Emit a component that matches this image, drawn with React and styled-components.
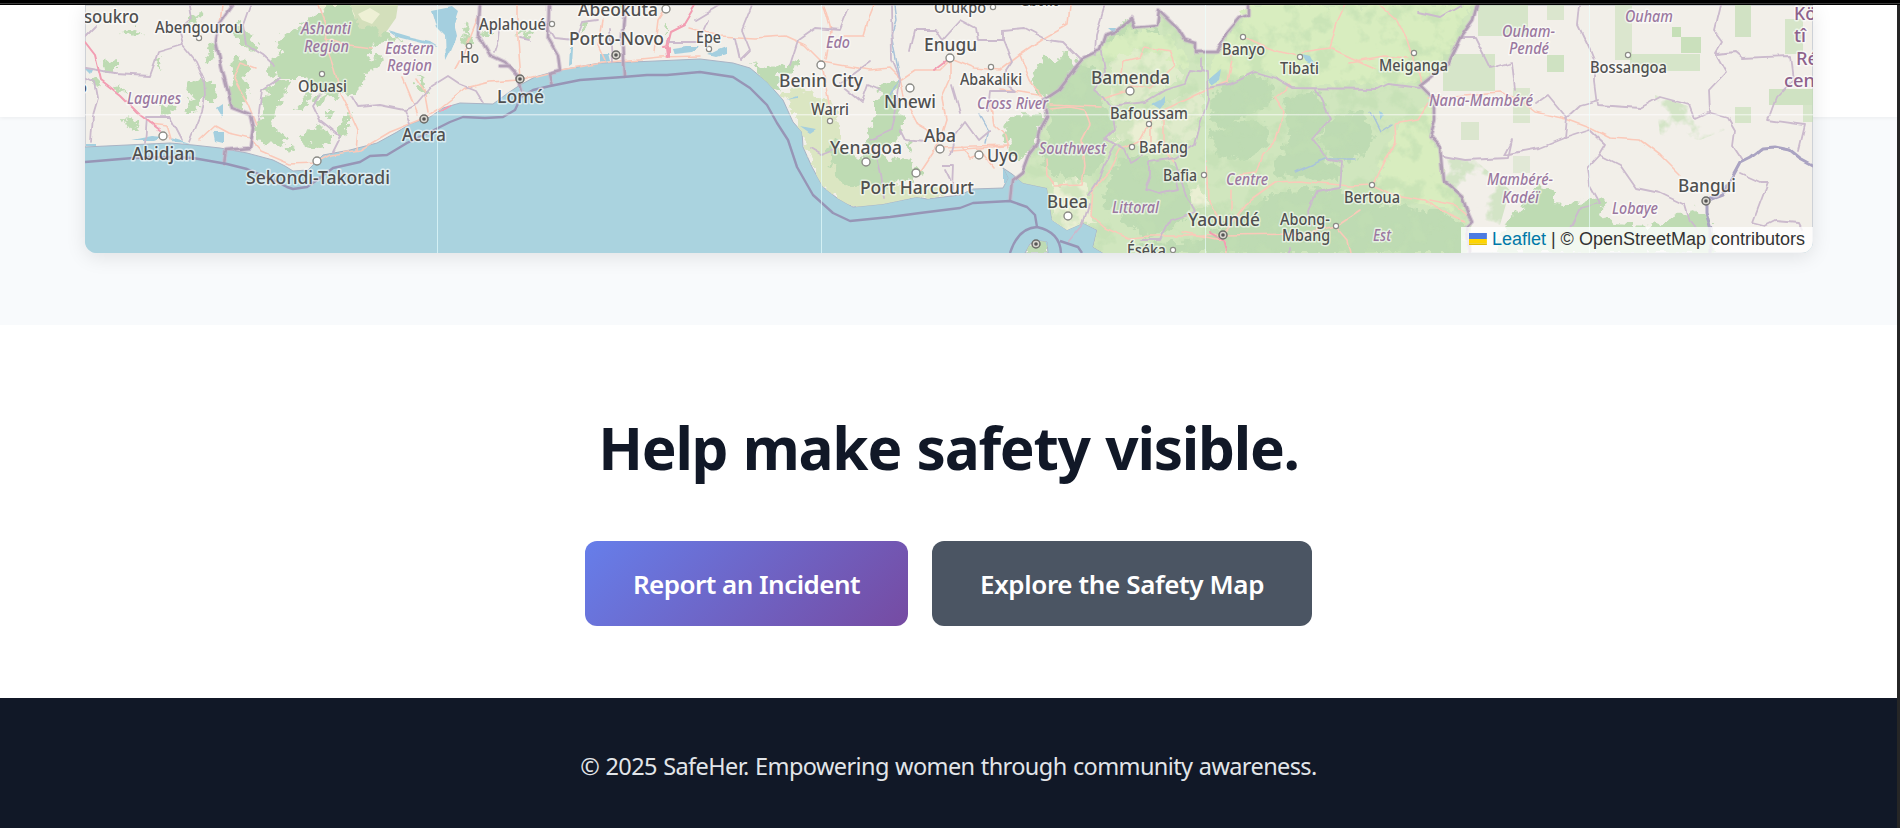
// App.jsx
import React from 'react';
import styled, { createGlobalStyle, css } from 'styled-components';

const GlobalStyle = createGlobalStyle`
  * {
    box-sizing: border-box;
  }

  body {
    margin: 0;
    overflow: hidden;
    background: #ffffff;
    font-family: 'Segoe UI', 'Noto Sans', sans-serif;
  }
`;

const Window = styled.div`
  height: 828px;
  display: flex;
  flex-direction: column;
  background: #262626;
`;

const TopEdge = styled.div`
  flex: none;
  height: 5px;
  background: linear-gradient(#000 3px, #3c3c3c 3px, #3c3c3c 4px, #000 4px);
`;

const Page = styled.main`
  flex: 1;
  margin-right: 3px;
  display: flex;
  flex-direction: column;
  background: #ffffff;
`;

const MapSection = styled.section`
  position: relative;
  height: 320px;
  padding: 0 84px 72px 85px;
  background: #f8fafc;
`;

// Sticky bar that sits behind the map while scrolling
const NavBar = styled.nav`
  position: absolute;
  top: 0;
  left: 0;
  right: 0;
  height: 112px;
  background: #ffffff;
  box-shadow: 0 1px 4px rgba(0, 0, 0, 0.06);
`;

const MapBox = styled.div`
  position: relative;
  height: 248px;
  overflow: hidden;
  border-radius: 0 0 12px 12px;
  background: #aad3df;
`;

const MapShadow = styled.div`
  position: relative;
  border-radius: 0 0 12px 12px;
  box-shadow: 0 4px 20px rgba(0, 0, 0, 0.1);
`;

const MapSvg = styled.svg`
  display: block;
  width: 1728px;
  height: 248px;
  font-family: 'Noto Sans', sans-serif;
`;

const Label = styled.text`
  font-size: ${(p) => p.$size}px;
  font-weight: 500;
  fill: #505050;
  stroke: rgba(255, 255, 255, 0.6);
  stroke-width: 3px;
  stroke-linejoin: round;
  paint-order: stroke;
  ${(p) =>
    p.$kind === 'region' &&
    css`
      fill: #9b78a0;
      font-style: italic;
    `}
  ${(p) =>
    p.$kind === 'country' &&
    css`
      fill: #8d618b;
    `}
`;

const Attribution = styled.div`
  position: absolute;
  right: 0;
  bottom: 0;
  width: 352px;
  height: 26px;
  display: flex;
  align-items: center;
  padding: 0 8px 2px;
  background: rgba(255, 255, 255, 0.8);
  color: #333333;
  font-family: 'Liberation Sans', Arial, sans-serif;
  font-size: 18px;
  line-height: 24px;
  white-space: pre;
`;

const Flag = styled.svg`
  width: 18px;
  height: 12px;
  margin-right: 5px;
`;

const LeafletLink = styled.a`
  color: #0078a8;
  text-decoration: none;
`;

const CallToAction = styled.section`
  height: 373px;
  padding: 72px 0;
  text-align: center;
`;

const Heading = styled.h2`
  margin: 0 0 46px;
  padding-top: 2px;
  color: #111827;
  font-size: 58.5px;
  font-weight: 700;
  line-height: 96px;
  letter-spacing: -1.25px;
  word-spacing: 1.5px;
`;

const ButtonRow = styled.div`
  display: flex;
  justify-content: center;
  gap: 24px;
`;

const Button = styled.button`
  height: 85px;
  padding: 0 48px;
  border: none;
  border-radius: 12px;
  background: ${(p) =>
    p.$primary ? 'linear-gradient(135deg, #667eea 0%, #764ba2 100%)' : '#4b5563'};
  color: #ffffff;
  font-family: inherit;
  font-size: 26px;
  font-weight: 600;
  letter-spacing: ${(p) => (p.$primary ? '-0.53px' : '-0.37px')};
  white-space: nowrap;
  cursor: pointer;
`;

const Footer = styled.footer`
  flex: 1;
  padding-top: 49px;
  background: #111827;
  color: #e2e5e9;
  text-align: center;
`;

const Copyright = styled.p`
  margin: 0;
  font-size: 23.5px;
  line-height: 38px;
  letter-spacing: -0.6px;
  word-spacing: 0.8px;
`;

const COAST =
  'M85 147L127 145 170 143 193 145 220 148 247 153 273 160 285 166 293 171 308 170 323 155 350 150 377 143 397 132 410 124 430 117 443 108 460 103 493 104 508 93 520 85 535 77 560 70 600 63 633 62 700 59 733 63 750 68 767 82 783 100 793 122 802 132 803 147 812 167 823 187 837 198 853 207 883 204 917 197 927 199 960 195 973 189 1003 188 1008 178 1003 168 1012 174 1023 183 1047 188 1052 220 1067 230 1083 223 1097 230 1093 247 1103 253 1813 253 1813 5 85 5Z M1025 253L1030 244 1040 241 1047 242 1048 253Z';

const CAMEROON =
  'M1010 200L1012 180 1022 172 1028 156 1038 143 1041 128 1047 117 1043 100 1058 90 1067 78 1083 58 1100 50 1105 35 1115 32 1132 18 1135 27 1157 25 1159 10 1177 27 1185 40 1195 43 1195 52 1217 52 1228 32 1240 18 1248 15 1248 5 1477 5 1473 20 1460 38 1448 63 1420 85 1435 100 1435 120 1430 137 1440 147 1443 180 1462 197 1468 213 1472 222 1467 253 1103 253 1093 247 1097 230 1083 223 1067 230 1052 220 1047 193Z';

// Dense woodland
const FORESTS = [
  'M275 40L300 25 330 5 352 5 358 24 392 36 402 40 372 45 370 62 362 85 352 95 335 97 318 90 302 78 280 78 268 72 272 60 282 52Z',
  'M252 133L262 115 266 88 278 80 290 82 280 100 272 125 286 137 278 146 262 145Z',
  'M300 136L318 124 328 130 330 145 318 147 303 144Z M342 118l8-4 0 16 -6 5 -8 2z',
  'M186 88L192 80 215 82 214 100 202 100 196 112 186 112 192 98Z',
  'M204 55l8-10 4 10 -5 8z M232 30l8-6 20 22 -8 6 -14-10z M228 60l18-2 4 12 -10 14 -6-10z',
  'M158 60l5-4 -2 14 -5-4z M102 62l14-2 0 12 -12 0z M120 30l14-2 8 6 -12 4z M112 85l8-2 6 8 -10 2z M122 119l12 2 4 8 -10-2z M92 80l5-3 6 8 -8 2z',
  'M228 84l16-6 6 16 -8 18 -14-6z M160 106l18 1 -8 7 -10-2z M188 14l14-2 -4 12 -10-2z',
  'M295 110l18-22 2 4 -14 20z M312 100l14-8 -2 12 -6 4z M285 145l10 0 -4 8z M325 108l10 6 -10 4z',
  'M364 64l12-8 8 2 -10 12 -12 6z M415 74l8 6 4 16 -6-4z M460 40l8-6 6 10 -8 4z M462 26l6-3 2 12 -6-3z M480 33l8-2 6 6 -10 0z',
  'M578 25l12-6 -4 10 -6 2z M515 35l16-6 4 5 -14 2z M618 8l8-2 0 8z M664 25l4 0 0 12z',
  'M750 64L770 69 798 60 796 70 775 76 782 92 766 84Z M785 62l12-4 2 6 -10 4z',
  'M826 146L834 140 845 155 858 160 872 152 884 156 896 162 906 170 900 182 885 190 870 182 858 186 846 186 835 172 830 158Z',
  'M868 134L876 115 876 100 884 84 898 78 893 100 900 108 904 130 898 140 884 150 866 142Z M906 144l8-1 -3 8z M868 164l36-6 20 16 -10 8 -26-6z',
  'M1032 78L1042 60 1060 58 1070 50 1075 62 1072 72 1055 88 1043 98 1034 84Z',
  'M1004 124L1018 114 1046 115 1040 128 1036 142 1022 158 1010 156Z',
  'M1048 90L1072 72 1084 64 1094 66 1095 90 1102 95 1108 110 1112 130 1106 142 1104 160 1090 178 1062 178 1042 165 1044 145 1050 125 1046 104Z',
  'M1112 170L1124 158 1135 154 1152 160 1170 162 1188 182 1194 200 1185 216 1165 232 1140 236 1125 222 1112 206 1104 212 1106 190Z',
  'M1212 95L1230 80 1250 72 1270 82 1274 98 1260 110 1240 118 1225 130 1210 118Z',
  'M1208 132L1250 118 1272 130 1264 150 1245 162 1220 156Z',
  'M1282 100L1315 90 1330 118 1315 140 1326 158 1340 165 1340 180 1300 178 1270 175 1282 150 1290 130Z M1332 118L1360 112 1374 130 1370 150 1352 160 1334 158 1318 142Z',
  'M1200 240L1250 205 1300 188 1340 190 1356 200 1380 206 1410 207 1440 211 1465 226 1467 253 1140 253 1130 245Z',
  'M1494 253L1506 222 1526 206 1540 186 1554 190 1556 203 1575 205 1592 196 1605 200 1600 215 1612 224 1650 226 1668 220 1690 209 1710 216 1714 253Z',
  'M1025 253L1030 244 1040 241 1048 242 1048 253Z M1110 30l22-10 4 12 -20 10 -12 0z M1134 32l24-4 10 16 -14 8z',
];

// Tile-aligned vegetation blocks: x, y, width, height, opacity
const BLOCKS = [
  [1478, 5, 50, 31, 0.6],
  [1547, 5, 17, 15, 0.5],
  [1547, 55, 17, 17, 0.75],
  [1443, 54, 52, 37, 0.6],
  [1513, 88, 17, 35, 0.5],
  [1461, 122, 18, 18, 0.5],
  [1513, 156, 17, 17, 0.35],
  [1615, 5, 17, 55, 0.5],
  [1672, 27, 9, 10, 0.95],
  [1681, 37, 20, 16, 0.85],
  [1630, 54, 70, 17, 0.6],
  [1735, 5, 16, 32, 0.7],
  [1785, 19, 18, 35, 0.6],
  [1769, 89, 44, 16, 0.75],
  [1735, 107, 16, 16, 0.6],
  [1803, 105, 10, 17, 0.6],
];

const BRIGHT =
  'M1250 5L1470 5 1455 40 1444 60 1420 82 1290 86 1265 70 1230 80 1208 88 1212 60 1230 35Z M1384 150L1400 122 1432 102 1434 120 1430 137 1440 147 1443 180 1462 197 1466 212 1440 206 1400 200 1378 184Z M1104 45L1130 30 1170 35 1190 60 1175 78 1150 72 1130 66 1105 60Z';

// Open, lighter land around Bamenda and Bafoussam
const GRASSLAND =
  'M1110 62L1130 50 1165 55 1185 75 1160 90 1145 100 1112 108Z M1114 118L1130 112 1160 104 1190 92 1204 90 1200 120 1192 140 1170 155 1150 150 1125 140 1114 130Z';

const WATER = [
  'M388 30l14 4 10 3 18 4 8 5 -12-2 -12-3 -16-4z M432 10l20-4 6 5 -4 12 3 14 -6 14 -5 10 -1-26 -8-8z',
  'M672 48l14-2 14 0 -8 6 -18 2z M718 50l8-3 0 7 -10 3 -8-2z M600 54l8-1 2 8 -10 2z M570 48l3 0 -1 16 -3 2z',
  'M213 132l10 0 0 12 -8-2z M126 140l26-5 12 1 -10 4z M170 138l20 6 -16-1z M216 108l6-4 0 14z M86 144l10 0 0 2 -10 0z M84 68l8 2 -2 4z',
  'M1208 80l14-12 -2 12 -8 5z M1152 104l8-4 4-4 0 8 -4 5z M1302 54l8 2 4 8 -8-3z M1108 28l8 0 -2 5z',
  'M1378 112l6 3 -4 6z M800 126l16 3 -6 4z M786 100l12-4 0 2z',
  'M1004 170l10 8 12 14 -22 0z M1046 240l4 1 -2 6z',
];

const MOUNT_CLEARINGS =
  'M1054 185l20-8 16 10 -4 20 12 16 -16 0 -14 10 -16-6z M1116 125l24-8 22 2 12 20 -16 12 -22-10 -20 0z M1190 190l10-4 8 20 -14 4z';

// Trunk and primary roads
const ROADS = [
  'M318 5L327 30 326 45 333 65 340 92 350 112 358 130 356 150',
  'M326 38L350 46 372 49',
  'M222 5L220 22 217 38 M256 68L240 62 233 78 248 105 256 125',
  'M200 140L215 126 228 133 250 138 262 152 290 164 315 163 330 155 360 150 390 132 420 120 440 108 465 88 490 82 520 80',
  'M418 115L410 95 403 78 M428 112L424 90 416 78 M150 123l16 2 4 14',
  'M455 68L465 50 480 12 M518 5L518 40 521 78',
  'M520 80L560 70 610 62 660 57 700 56 M605 60L598 45 602 20 M654 52L658 20 668 5',
  'M690 28L720 36 755 38 785 36 805 45 822 62 845 66 870 70 890 68 900 78',
  'M822 65L825 80 830 110 M824 5L831 30 826 60 M864 35L870 15 874 5 M845 36l18 0',
  'M900 78L905 100 918 125 930 132 M900 80L915 70 940 70 950 60',
  'M950 58L950 80 942 98 946 120 938 145 920 172 M950 58L975 68 1000 70 1020 55 1045 38 1068 25 1070 5',
  'M1020 55L1030 80 1042 98 M950 150L1005 146 M980 150l14 18 M1000 90L1020 92 1038 95',
  'M962 146L970 158 982 153 M938 147L1008 145 M990 100L994 125 1005 135 1008 148',
  'M1050 109L1070 107 1085 110 1090 125 1082 140 1085 165 1082 185 1054 186 1047 175 1046 160',
  'M1050 105L1100 107 M1102 99L1125 92 1132 85 1150 88 1165 75 1175 65 1170 52 1145 48 1140 58 1124 62 1122 72',
  'M1148 125L1140 140 1120 150 1110 170 1092 190 1090 215 1105 228 1128 238 1150 236 1186 236 1222 234 M1150 118l0 24 M1164 118l0 32 10 12 M1165 110L1190 98 1207 90 1228 82 1232 60 1228 45',
  'M1243 37L1275 50 1300 57 M1302 52L1330 48 1338 20 1345 5 M1330 48L1352 58 1375 68',
  'M1290 85L1275 98 1284 112 1276 140 1262 155 1256 172 1240 174',
  'M1223 235L1250 200 1275 182 1300 181 1350 186 1372 185 M1206 160L1208 200 1223 226 M1232 190L1232 210',
  'M1223 235L1300 234 1336 226 1360 210 M1223 235L1226 253 M1336 226L1348 240 1351 253 M1182 232L1222 240',
  'M1372 186L1384 160 1396 142 1395 124 1418 120 1428 104 M1380 5L1397 20 1408 42 1412 55 1422 82 M1350 62L1384 56 1408 58',
  'M1428 98L1500 92 1520 100 1535 112 1566 119 1590 128 1610 138 1640 140 1660 155 1680 175',
  'M1372 185L1395 195 1425 200 1450 215 1465 222 M1430 200L1455 205 1466 214',
];

const MOTORWAYS = [
  'M85 42L95 55 101 80 120 95 140 115 160 130',
  'M668 57L667 48 671 32 685 25 697 5 M664 48l5-1 0 10 M950 58l-8 6 -8 6',
  'M1210 232L1223 240 1226 250 M440 111l10-6',
];

// Second-level admin boundaries
const BORDERS = [
  'M85 68L115 73 150 75 158 52 182 45 196 62 204 80 205 95 202 112 190 142 M182 45L178 30 192 18 190 5',
  'M85 77L95 82 98 98 93 115 91 142 M85 38l12-12 M145 143L147 117 170 117 182 140',
  'M250 5L243 25 246 45 262 55 274 66 M352 97L358 107 380 105 405 110 417 104 432 86 448 76 460 84 475 90 483 103',
  'M320 95L313 105 320 120 330 128 340 136 332 152 M405 110l5 14 M258 120L262 90 280 78',
  'M500 20L498 40 494 52 M520 38l10 2 M545 22L555 38 575 40 582 22 598 20 M610 28L612 62',
  'M790 65L798 40 815 28 840 30 848 10 M735 38L740 60 750 50 742 30 752 5 M695 20L720 5 M668 42l30 0 10-22',
  'M810 148L822 155 835 150 M862 102L840 84 870 62 M862 102L868 85 880 90 M900 78L892 60 891 5',
  'M900 80L896 110 892 130 870 140 M900 130L905 140 925 142 M945 170L950 180 M875 150L880 175 884 198',
  'M910 52L915 30 935 30 942 40 960 20 975 28 977 40 1003 40 1003 30 1025 28 1048 40 1062 42 1080 60 M1105 5L1096 35 1095 55',
  'M1003 40L1012 62 1000 80 1015 92 990 92 988 110 M952 85L960 112 M950 155L955 135 965 122 978 140 990 130 M952 190L953 165 942 165',
  'M1102 52L1105 72 1094 90 1102 96 1112 110 1115 130 1105 140 1116 145 1104 165 1098 180 1088 195 M1110 106L1145 102 1165 90 1185 84 1190 70 1207 72 1208 100 1200 125 1195 145 1175 158 1150 162 1150 175 1145 190 1160 194 1178 190 1175 178 M1105 138L1125 150 1130 162 1142 155',
  'M1207 88L1230 84 1255 72 1275 78 1292 88 1378 89 1388 84 1420 88 M1316 90L1330 118 1312 138 1328 160 1342 162 1340 188 1316 192 1308 210 1310 225 M1175 162L1186 195 1195 212 1170 220 1160 240 1140 240',
  'M1068 242l15-18 6-20 M1202 58L1202 70 M1290 247l0 6',
  'M1460 38L1475 38 1490 68 1512 62 1515 90 M1535 104L1548 95 1567 118 1565 138 1540 148 1518 152 1504 155 1512 140 1508 158 1465 160 1443 156',
  'M1580 5L1578 25 1590 50 1594 60 1594 82 1597 105 1640 108 1660 97 1690 105 1695 118 1708 112 1728 118 1735 130 1733 145 1743 160',
  'M1720 5L1714 30 1723 42 1716 54 1726 72 1709 90 1710 112 M1718 54L1735 52 1742 58 1790 56 1793 80 1776 98 1768 120 1804 125 1798 150',
  'M1566 118L1580 105 1598 100 M1565 138L1590 130 1606 145 1600 155 1620 165 1636 188 1660 193 1685 205 1690 222 1700 235',
  'M1600 155L1588 168 1590 185 1600 203 1580 208 1570 228 M1740 173L1760 182 1768 182 1753 222 1765 225 1775 220 1798 222 1802 230 M1418 12L1440 17 1460 5',
];

const NATIONAL = [
  'M232 5L220 22 216 42 222 68 232 108 250 115 253 128 250 148 226 150 224 163',
  'M480 5L478 35 490 55 505 62 518 75 522 90',
  'M549 5L548 38 558 55 560 70 549 73 552 86 M625 5L622 40 624 76 M500 66L510 66 520 78',
  'M1010 200L1012 180 1022 172 1028 156 1038 143 1041 128 1047 117 1043 100 1058 90 1075 68 1083 58 1100 50 1105 35 1115 32 1132 18 1135 27 1157 25 1159 10 1177 27 1185 40 1195 43 1195 52 1217 52 1228 32 1240 18 1248 15 1248 5',
  'M1477 5L1473 20 1460 38 1448 63 1420 85 1435 100 1435 120 1430 137 1440 147 1443 180 1462 197 1468 213 1472 222 1467 227 1469 253',
];

const MARITIME =
  'M85 162L133 158 170 157 193 158 227 164 247 169 273 180 287 187 293 189 307 187 317 180 333 168 360 162 370 156 387 155 407 143 430 132 450 122 463 117 485 118 503 117 515 110 521 97 533 90 550 86 580 80 623 77 647 75 667 75 700 72 733 77 750 88 767 105 777 123 788 140 797 167 813 195 833 213 850 221 890 217 920 213 960 208 973 203 1010 201 1027 207 1035 215 1037 227 M1010 253Q1018 228 1037 227 1060 232 1061 253 M1060 241L1078 247 1082 253';

const RIVER = 'M1813 165L1800 158 1790 150 1775 147 1763 148 1750 158 1740 163 1733 176 1722 195 1706 201 1706 212 1711 228 1711 253';

// [text, left, baseline, width, size, kind]
const LABELS = [
  ['soukro', 84, 23, 55, 18.5],
  ['o', 77, 93, 10, 15.5],
  ['Abengourou', 155, 32.5, 88, 15.5],
  ['Ashanti', 301, 34, 50, 15.5, 'region'],
  ['Region', 304, 52, 45, 15.5, 'region'],
  ['Eastern', 385, 54, 49, 15.5, 'region'],
  ['Region', 387, 71, 45, 15.5, 'region'],
  ['Lagunes', 127, 103.5, 54, 15.5, 'region'],
  ['Obuasi', 298, 92, 49, 15.5],
  ['Ho', 460, 63, 19, 15.5],
  ['Aplahoué', 479, 30, 67, 15.5],
  ['Lomé', 497, 102.5, 47, 18.5],
  ['Abidjan', 132, 160, 63, 18.5],
  ['Accra', 402, 141, 44, 18.5],
  ['Sekondi-Takoradi', 246, 184, 144, 18.5],
  ['Abeokuta', 578, 15.5, 80, 18.5],
  ['Porto-Novo', 569, 45, 95, 18.5],
  ['Epe', 696, 42.5, 25, 15.5],
  ['Edo', 826, 48, 24, 15.5, 'region'],
  ['Benin City', 779, 87, 84, 18.5],
  ['Warri', 811, 115, 38, 15.5],
  ['Nnewi', 884, 107.5, 52, 18.5],
  ['Yenagoa', 830, 154, 72, 18.5],
  ['Aba', 924, 142, 32, 18.5],
  ['Port Harcourt', 860, 193.5, 114, 18.5],
  ['Enugu', 924, 50.5, 53, 18.5],
  ['Otukpo', 934, 13, 52, 15.5],
  ['Gboko', 1020, 6, 40, 15.5],
  ['Abakaliki', 960, 84.5, 62, 15.5],
  ['Cross River', 977, 109, 71, 15.5, 'region'],
  ['Uyo', 987, 162, 31, 18.5],
  ['Southwest', 1039, 153.5, 67, 15.5, 'region'],
  ['Bamenda', 1091, 84, 79, 18.5],
  ['Bafoussam', 1110, 119, 78, 15.5],
  ['Bafang', 1139, 152.5, 49, 15.5],
  ['Bafia', 1163, 181, 34, 15.5],
  ['Centre', 1226, 184.5, 42, 15.5, 'region'],
  ['Littoral', 1112, 213, 47, 15.5, 'region'],
  ['Buea', 1047, 207.5, 41, 18.5],
  ['Yaoundé', 1188, 225.5, 72, 18.5],
  ['Abong-', 1280, 224.5, 50, 15.5],
  ['Mbang', 1282, 241, 48, 15.5],
  ['Éséka', 1127, 256, 39, 15.5],
  ['Bertoua', 1344, 203, 56, 15.5],
  ['Est', 1373, 241, 18, 15.5, 'region'],
  ['Banyo', 1222, 55, 43, 15.5],
  ['Tibati', 1280, 74, 39, 15.5],
  ['Meiganga', 1379, 71, 69, 15.5],
  ['Ouham-', 1502, 36.5, 53, 15.5, 'region'],
  ['Pendé', 1509, 54, 40, 15.5, 'region'],
  ['Ouham', 1625, 21.5, 48, 15.5, 'region'],
  ['Nana-Mambéré', 1429, 105.5, 104, 15.5, 'region'],
  ['Bossangoa', 1590, 72.5, 77, 15.5],
  ['Mambéré-', 1487, 185, 66, 15.5, 'region'],
  ['Kadéï', 1502, 203, 37, 15.5, 'region'],
  ['Lobaye', 1612, 213.5, 46, 15.5, 'region'],
  ['Bangui', 1678, 191.5, 58, 18.5],
  ['Kö', 1794, 20, 22, 18.5, 'country'],
  ['tî', 1794, 42, 12, 18.5, 'country'],
  ['Ré', 1796, 65, 22, 18.5, 'country'],
  ['cen', 1784, 87, 31, 18.5, 'country'],
];

const TOWNS = [
  [199, 38], [322, 74], [469, 46], [552, 24], [709, 49], [830, 121], [993, 7], [991, 67],
  [1149, 124], [1132, 147], [1204, 175], [1336, 226], [1173, 250], [1372, 185], [1243, 37],
  [1300, 57], [1414, 53], [1628, 55],
];

const CITIES = [
  [163, 136], [317, 161], [666, 9], [821, 65], [910, 88], [950, 58], [866, 162], [940, 149],
  [916, 173], [979, 155], [1130, 91], [1068, 216],
];

const CAPITALS = [[424, 119], [520, 79], [616, 55], [1223, 235], [1706, 201], [1036, 244]];

const TILE_COLUMNS = [437.5, 821.5, 1205.5, 1589.5];

const MapView = () => (
  <MapSvg viewBox="85 5 1728 248" role="img" aria-label="Safety map">
    <defs>
      <filter id="ragged" x="85" y="0" width="1730" height="260" filterUnits="userSpaceOnUse">
        <feTurbulence type="fractalNoise" baseFrequency="0.12" numOctaves="3" seed="4" result="noise" />
        <feDisplacementMap in="SourceGraphic" in2="noise" scale="15" xChannelSelector="R" yChannelSelector="G" />
        <feGaussianBlur stdDeviation="0.6" />
      </filter>
      <filter id="wobble" x="85" y="0" width="1730" height="260" filterUnits="userSpaceOnUse">
        <feTurbulence type="fractalNoise" baseFrequency="0.07" numOctaves="1" seed="9" result="noise" />
        <feDisplacementMap in="SourceGraphic" in2="noise" scale="6" xChannelSelector="R" yChannelSelector="G" />
        <feGaussianBlur stdDeviation="0.5" />
      </filter>
      <filter id="dapple" x="85" y="0" width="1730" height="260" filterUnits="userSpaceOnUse">
        <feTurbulence type="fractalNoise" baseFrequency="0.045" numOctaves="4" seed="21" />
        <feColorMatrix values="0 0 0 0 0  0 0 0 0 0  0 0 0 0 0  6 0 0 0 -3" result="mask" />
        <feComposite in="SourceGraphic" in2="mask" operator="in" />
        <feGaussianBlur stdDeviation="0.7" />
      </filter>
      <clipPath id="land">
        <path d={COAST} />
      </clipPath>
    </defs>

    <rect x="85" y="5" width="1728" height="248" fill="#aad3df" />
    <path d={COAST} fill="#f2efe9" stroke="#a9b3c4" strokeWidth="1" />

    <g clipPath="url(#land)">
      <path d={CAMEROON} fill="#d0e6be" />
      <path d="M783 92L800 88 830 100 838 128 838 150 860 180 900 185 950 190 920 200 860 210 835 200 815 175 800 132Z" fill="#dbe6c2" filter="url(#ragged)" />
      <path d="M330 5L398 5 396 18 382 38 365 38 352 26 348 5Z" fill="#d3dfbb" />
      <path d="M318 5L350 5 355 16 345 24 330 18Z M358 14l12-6 10 6 -8 10 -10-4z" fill="#eef0d5" />
      <g fill="#bedbb3" filter="url(#ragged)">
        {FORESTS.map((d) => (
          <path key={d} d={d} />
        ))}
      </g>
      <path d={BRIGHT} fill="#d8edbf" filter="url(#ragged)" />
      <path d={GRASSLAND} fill="#e3edcf" opacity="0.8" filter="url(#ragged)" />
      <path d={MOUNT_CLEARINGS} fill="#eaefd3" filter="url(#ragged)" />
      <path d={CAMEROON} fill="#c1deb3" opacity="0.6" filter="url(#dapple)" />
      <path d="M1440 158L1475 160 1510 190 1500 225 1470 226 1462 197 1443 180Z M1655 95L1700 110 1725 130 1700 140 1660 135Z" fill="#d3e4c6" filter="url(#dapple)" />
      {BLOCKS.map(([x, y, width, height, opacity]) => (
        <rect key={`${x}-${y}`} x={x} y={y} width={width} height={height} fill="#c3ddb4" opacity={opacity} />
      ))}
      <g fill="#a4cfdf" filter="url(#wobble)">
        {WATER.map((d) => (
          <path key={d} d={d} />
        ))}
      </g>
    </g>

    <g fill="none" strokeLinejoin="round" strokeLinecap="round" filter="url(#wobble)">
      <path d="M894 5L896 20 891 35 900 78 890 95 M980 115l8 14 -3 14 M1295 172l30-13 30 0 M1370 112l10 20 12-8" stroke="#a9c3da" strokeWidth="1.5" />
      {ROADS.map((d) => (
        <path key={d} d={d} stroke="#fbc9b9" strokeWidth="1.6" />
      ))}
      {BORDERS.map((d) => (
        <path key={d} d={d} stroke="#cbbacd" strokeWidth="1.8" />
      ))}
      {MOTORWAYS.map((d) => (
        <path key={d} d={d} stroke="#f29db2" strokeWidth="2" />
      ))}
      {NATIONAL.map((d) => (
        <g key={d}>
          <path d={d} stroke="#c9b8cb" strokeWidth="4.5" opacity="0.6" />
          <path d={d} stroke="#b29fb6" strokeWidth="2.4" />
        </g>
      ))}
      <path d={RIVER} stroke="#aaa3c2" strokeWidth="3" />
    </g>
    <path d={MARITIME} fill="none" stroke="#9795b6" strokeWidth="2.4" strokeLinejoin="round" />

    {/* seams between the map tiles */}
    <rect x="85" y="114.3" width="1728" height="1" fill="#ffffff" opacity="0.75" />
    {TILE_COLUMNS.map((x) => (
      <rect key={x} x={x - 0.5} y="5" width="1" height="248" fill="#e9ffff" opacity="0.65" />
    ))}

    {TOWNS.map(([x, y]) => (
      <circle key={`${x}-${y}`} cx={x} cy={y} r="2.6" fill="#fff" stroke="#8b8b86" strokeWidth="1.2" />
    ))}
    {CITIES.map(([x, y]) => (
      <circle key={`${x}-${y}`} cx={x} cy={y} r="4" fill="#fff" stroke="#8b8b86" strokeWidth="1.4" />
    ))}
    {CAPITALS.map(([x, y]) => (
      <g key={`${x}-${y}`}>
        <circle cx={x} cy={y} r="4" fill="#d9d6cf" stroke="#6b6b68" strokeWidth="1.5" />
        <circle cx={x} cy={y} r="1.8" fill="#555" />
      </g>
    ))}
    {LABELS.map(([text, x, y, width, size, kind]) => (
      <Label
        key={`${text}-${x}`}
        x={x}
        y={y}
        textLength={width}
        lengthAdjust="spacingAndGlyphs"
        $size={size}
        $kind={kind}
      >
        {text}
      </Label>
    ))}
  </MapSvg>
);

const App = () => {
  return (
    <Window>
      <GlobalStyle />
      <TopEdge />
      <Page>
        <MapSection>
          <NavBar />
          <MapShadow>
            <MapBox>
              <MapView />
              <Attribution>
                <Flag viewBox="0 0 12 8">
                  <path fill="#4C7BE1" d="M0 0h12v4H0z" />
                  <path fill="#FFD500" d="M0 4h12v3H0z" />
                  <path fill="#E0BC00" d="M0 7h12v1H0z" />
                </Flag>
                <LeafletLink>Leaflet</LeafletLink> | © OpenStreetMap contributors
              </Attribution>
            </MapBox>
          </MapShadow>
        </MapSection>

        <CallToAction>
          <Heading>Help make safety visible.</Heading>
          <ButtonRow>
            <Button $primary>Report an Incident</Button>
            <Button>Explore the Safety Map</Button>
          </ButtonRow>
        </CallToAction>

        <Footer>
          <Copyright>© 2025 SafeHer. Empowering women through community awareness.</Copyright>
        </Footer>
      </Page>
    </Window>
  );
};

export default App;
